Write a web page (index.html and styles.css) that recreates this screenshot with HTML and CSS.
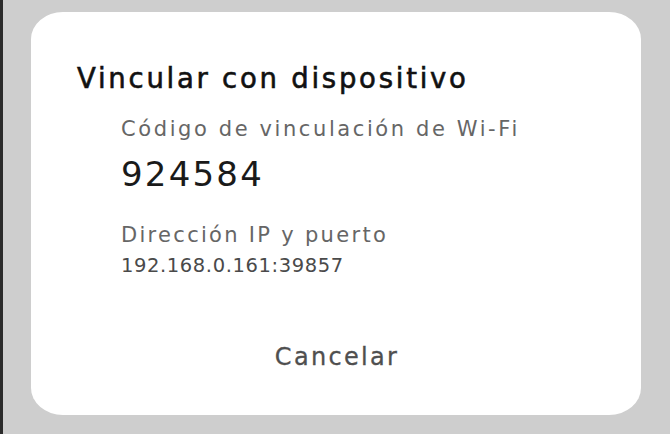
FILE: index.html
```html
<!DOCTYPE html>
<html lang="es">
<head>
<meta charset="utf-8">
<link rel="stylesheet" href="styles.css">
</head>
<body>
<div class="screen">
  <div class="edge"></div>
  <div class="backdrop">
    <div class="dialog">
      <h1 class="title">Vincular con dispositivo</h1>
      <div class="content">
        <div class="label">Código de vinculación de Wi-Fi</div>
        <div class="code">924584</div>
        <div class="label label-ip">Dirección IP y puerto</div>
        <div class="value">192.168.0.161:39857</div>
      </div>
      <div class="actions">
        <button class="btn">Cancelar</button>
      </div>
    </div>
  </div>
</div>
</body>
</html>
```
FILE: styles.css
```css
html, body {
  margin: 0;
  padding: 0;
  width: 670px;
  height: 434px;
  overflow: hidden;
  font-family: "DejaVu Sans", "Noto Sans", sans-serif;
}
.screen {
  display: flex;
  width: 670px;
  height: 434px;
}
.edge {
  width: 3px;
  background: #2b2b2b;
}
.backdrop {
  flex: 1;
  background: #cecece;
  padding: 12px 0 0 28px;
}
.dialog {
  width: 610px;
  height: 403px;
  box-sizing: border-box;
  background: #ffffff;
  border-radius: 32px / 27px;
  padding-top: 50px;
  display: flex;
  flex-direction: column;
}
.title {
  margin: 0;
  padding-left: 46px;
  font-size: 27.5px;
  font-weight: normal;
  -webkit-text-stroke: 0.6px #111111;
  color: #111111;
  line-height: 32px;
  letter-spacing: 2.75px;
}
.content {
  padding: 21px 0 0 90px;
}
.label {
  font-size: 21px;
  color: #666666;
  line-height: 28px;
  letter-spacing: 2.6px;
}
.code {
  font-size: 34px;
  color: #1a1a1a;
  line-height: 40px;
  margin-top: 11px;
  letter-spacing: 2.2px;
}
.label-ip {
  margin-top: 27px;
  letter-spacing: 2.3px;
}
.value {
  font-size: 19.5px;
  color: #4a4a4a;
  line-height: 26px;
  margin-top: 4px;
  letter-spacing: 0.6px;
}
.actions {
  display: flex;
  justify-content: center;
  margin-top: 63px;
}
.btn {
  border: none;
  background: none;
  font-family: inherit;
  font-size: 24px;
  line-height: 30px;
  color: #4f4f4f;
  padding: 0 0 0 2px;
  letter-spacing: 2.3px;
  -webkit-text-stroke: 0.3px #4f4f4f;
}
```
